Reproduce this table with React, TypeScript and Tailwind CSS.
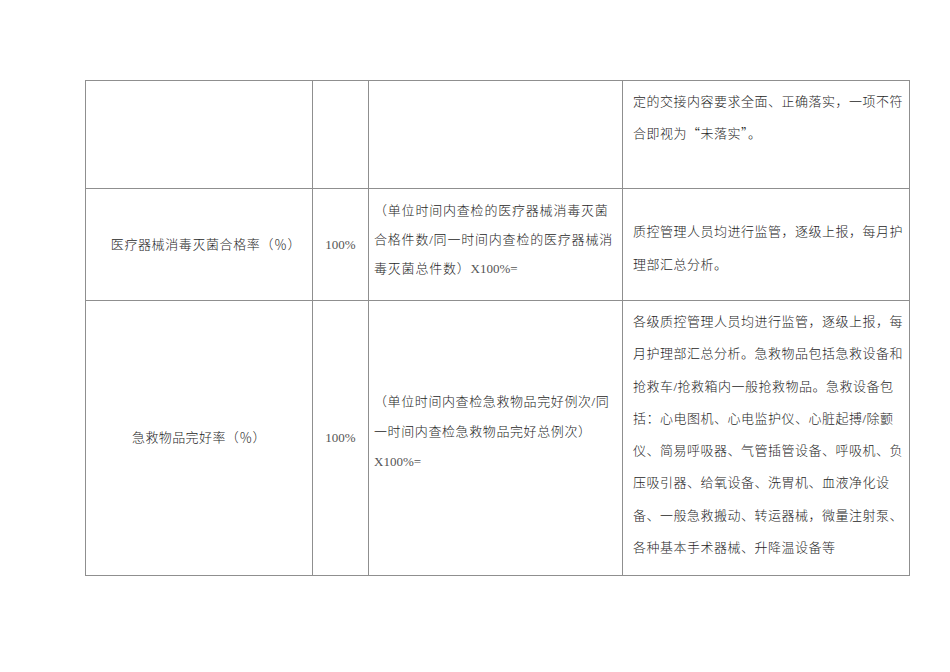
import React from "react";

const font = "font-['Liberation_Serif','Noto_Sans_CJK_SC',serif]";
const cjk = "font-['Noto_Sans_CJK_SC',sans-serif]";

function Lines({ lines, className }: { lines: React.ReactNode[]; className: string }) {
  return (
    <div className={className}>
      {lines.map((l, i) => (
        <div key={i} className="whitespace-nowrap">
          {l}
        </div>
      ))}
    </div>
  );
}

const cell = "border-r border-b border-[#8f8f8f]";

export default function App() {
  return (
    <div className={`w-[950px] h-[672px] bg-white pt-[80px] pl-[85px] text-[13px] text-[#262626] ${font}`}>
      <div className="w-[825px] border-t border-l border-[#8f8f8f]">
        {/* row 1 */}
        <div className="grid grid-cols-[227px_56px_254px_287px] h-[108px]">
          <div className={cell} />
          <div className={cell} />
          <div className={cell} />
          <div className={cell}>
            <Lines
              className="pl-[10px] pt-[5px] leading-[31px] tracking-[0.5px] font-light"
              lines={[
                "定的交接内容要求全面、正确落实，一项不符",
                <span className={cjk}>合即视为“未落实”。</span>,
              ]}
            />
          </div>
        </div>

        {/* row 2 */}
        <div className="grid grid-cols-[227px_56px_254px_287px] h-[112px]">
          <div className={`${cell} flex items-center justify-center pl-[14px] tracking-[0.6px] font-light`}>
            医疗器械消毒灭菌合格率（％）
          </div>
          <div className={`${cell} flex items-center justify-center text-[#555]`}>100%</div>
          <div className={cell}>
            <Lines
              className="pl-[5px] pt-[7px] leading-[29px] tracking-[0.8px]"
              lines={[
                <span className="font-light">（单位时间内查检的医疗器械消毒灭菌</span>,
                <span className="font-light">合格件数/同一时间内查检的医疗器械消</span>,
                <>
                  <span className="font-light">毒灭菌总件数）</span>
                  <span className="tracking-normal text-[#555]">X100%=</span>
                </>,
              ]}
            />
          </div>
          <div className={cell}>
            <Lines
              className="pl-[10px] pt-[26px] leading-[33px] tracking-[0.5px] font-light"
              lines={["质控管理人员均进行监管，逐级上报，每月护", "理部汇总分析。"]}
            />
          </div>
        </div>

        {/* row 3 */}
        <div className="grid grid-cols-[227px_56px_254px_287px] h-[275px]">
          <div className={`${cell} flex items-center justify-center tracking-[0.4px] font-light`}>
            急救物品完好率（％）
          </div>
          <div className={`${cell} flex items-center justify-center text-[#555]`}>100%</div>
          <div className={cell}>
            <Lines
              className="pl-[5px] pt-[86px] leading-[30px] tracking-[0.6px]"
              lines={[
                <span className="font-light">（单位时间内查检急救物品完好例次/同</span>,
                <span className="font-light">一时间内查检急救物品完好总例次）</span>,
                <span className="tracking-normal text-[#555]">X100%=</span>,
              ]}
            />
          </div>
          <div className={cell}>
            <Lines
              className="pl-[10px] pt-[5px] leading-[32.3px] tracking-[0.5px] font-light"
              lines={[
                "各级质控管理人员均进行监管，逐级上报，每",
                "月护理部汇总分析。急救物品包括急救设备和",
                "抢救车/抢救箱内一般抢救物品。急救设备包",
                "括：心电图机、心电监护仪、心脏起搏/除颤",
                "仪、简易呼吸器、气管插管设备、呼吸机、负",
                "压吸引器、给氧设备、洗胃机、血液净化设",
                "备、一般急救搬动、转运器械，微量注射泵、",
                "各种基本手术器械、升降温设备等",
              ]}
            />
          </div>
        </div>
      </div>
    </div>
  );
}
